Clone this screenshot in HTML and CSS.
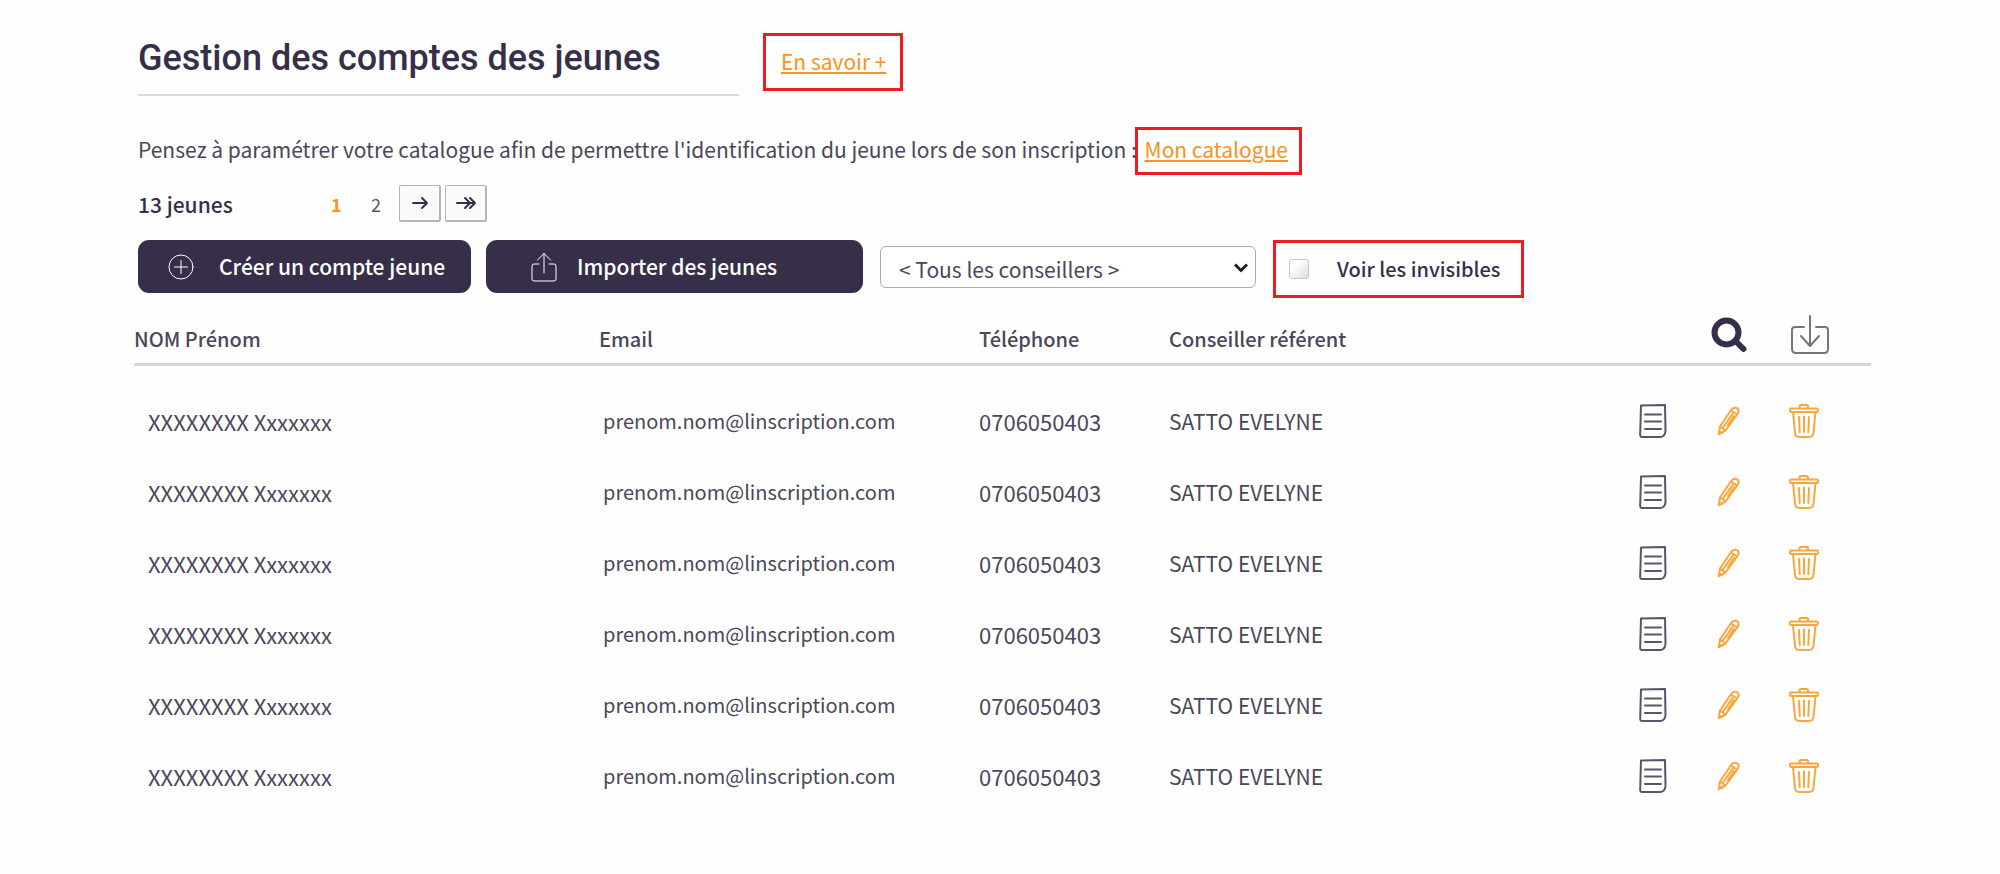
FILE: index.html
```html
<!DOCTYPE html>
<html lang="fr">
<head>
    <meta charset="UTF-8">
    <meta name="viewport" content="width=device-width, initial-scale=1.0">
    <title>Gestion des comptes des jeunes</title>
    <link rel="stylesheet" href="styles.css">
</head>
<body>
    <svg class="sprite" aria-hidden="true">
        <symbol id="doc" viewBox="0 0 28 36">
            <path d="M2 2.500 L26 2 L26.500 28 Q26 33.500 21.500 34 L3 34 Q1 34 1.200 31 Z M6 11.500h16M6 18.500h16M6 26h16"/>
        </symbol>
        <symbol id="pencil" viewBox="0 0 24 30">
            <path d="M1.800 28.200 L3 20.500 L14.500 3.500 Q17.500 .5 20.500 2.500 Q22.800 4.500 20.500 8 L8.500 24.500 Z M3 20.500l5.500 4M14 4.500l6 4M6 21.500L16.500 6.500M11 19l6-9M2.500 25.500l2.500 1.500"/>
        </symbol>
        <symbol id="trash" viewBox="0 0 32 36">
            <path d="M11.500 5V3.500Q11.500 2 13 2h5.500Q20 2 20 3.500V5M2.500 5.500h27q1.500 3-1 3.500H3.500Q1 9 2.500 5.500zM5 9l2 21q.5 4 4 4h10q4 0 4.500-4l2-21M11 14l.7 15M16 13.500V29M21 14l-.7 15"/>
        </symbol>
    </svg>

    <header class="title-bar">
        <h1>Gestion des comptes des jeunes</h1>
        <a href="#aide" class="link framed more">En savoir +</a>
    </header>

    <p class="intro">Pensez à paramétrer votre catalogue afin de permettre l'identification du jeune lors de son inscription : <a href="#catalogue" class="link framed catalogue">Mon catalogue</a></p>

    <div class="pager">
        <strong class="count">13 jeunes</strong>
        <nav>
            <a href="#p1" class="current">1</a>
            <a href="#p2">2</a>
            <button aria-label="Page suivante"><svg width="18" height="16" viewBox="0 0 18 16"><path d="M2 8h14M11 3l5 5-5 5"/></svg></button>
            <button aria-label="Dernière page"><svg width="22" height="16" viewBox="0 0 22 16"><path d="M2 8h18M10 3l5 5-5 5M15 3l5 5-5 5"/></svg></button>
        </nav>
    </div>

    <div class="toolbar">
        <button class="btn create">
            <svg width="28" height="28" viewBox="0 0 28 28"><circle cx="14" cy="14" r="12"/><path d="M14 7.500v13M7.500 14h13"/></svg>
            <span>Créer un compte jeune</span>
        </button>
        <button class="btn import">
            <svg width="26" height="30" viewBox="0 0 26 30"><path d="M8 12H3q-2 0-2 2v13q0 2 2 2h20q2 0 2-2V14q0-2-2-2h-5M13 21V1.500M6.500 8L13 1.500 19.500 8"/></svg>
            <span>Importer des jeunes</span>
        </button>
        <div class="select-box">
            <select aria-label="Conseiller">
                <option>&lt; Tous les conseillers &gt;</option>
            </select>
            <svg width="16" height="12" viewBox="0 0 16 12"><path d="M2 2.500l6 6 6-6"/></svg>
        </div>
        <div class="framed invisibles">
            <input type="checkbox" id="invisibles">
            <label for="invisibles">Voir les invisibles</label>
        </div>
    </div>

    <table>
        <colgroup>
            <col class="c-name"><col class="c-email"><col class="c-phone"><col><col class="c-icon"><col class="c-icon"><col class="c-last">
        </colgroup>
        <thead>
            <tr>
                <th>NOM Prénom</th>
                <th>Email</th>
                <th>Téléphone</th>
                <th>Conseiller référent</th>
                <th></th>
                <th class="icon"><button aria-label="Rechercher"><svg class="search" width="36" height="36" viewBox="0 0 36 36"><circle cx="15.500" cy="15.500" r="12"/><path d="M24.500 24l8 8"/></svg></button></th>
                <th class="icon last"><button aria-label="Exporter"><svg class="export" width="40" height="40" viewBox="0 0 40 40"><path d="M14 12H5q-3 0-3 3v19q0 4 4 4h28q4 0 4-4V15q0-3-3-3h-9M20 1v29M11 21l9 10 9-10"/></svg></button></th>
            </tr>
        </thead>
        <tbody id="rows"></tbody>
    </table>

    <script src="script.js"></script>
</body>
</html>
```
FILE: styles.css
```css
* {
    box-sizing: border-box;
}
body {
    margin: 0;
    padding: 33px 129px 40px 134px;
    font-family: "Noto Sans CJK SC", "Open Sans", sans-serif;
    font-size: 21px;
    line-height: 32px;
    color: #4b475a;
    background: #fefefe;
}
button, select {
    font: inherit;
    cursor: pointer;
}
svg {
    fill: none;
    stroke: currentColor;
    stroke-width: 2;
    stroke-linecap: round;
    stroke-linejoin: round;
}
.sprite {
    display: none;
}
.link {
    color: #f7941d;
    text-decoration: underline;
    text-decoration-thickness: 2px;
    text-underline-offset: 2px;
}
.framed {
    border: 3px solid #ed1c24;
}

.title-bar {
    display: flex;
    align-items: flex-start;
    gap: 24px;
    padding-left: 4px;
}
h1 {
    margin: 0;
    width: 601px;
    height: 63px;
    padding-top: 5px;
    border-bottom: 2px solid #dcdcdc;
    font-family: Roboto, sans-serif;
    font-size: 36px;
    font-weight: 500;
    line-height: 40px;
    color: #372f49;
}
.more {
    padding: 9px 14px 11px 15px;
}
.intro {
    margin: 29px 0 0;
    padding: 8px 4px;
}
.catalogue {
    margin-left: -7px;
    padding: 4px 11px 8px 7px;
}

.pager {
    display: flex;
    align-items: center;
    margin-top: 12px;
    padding-left: 4px;
    color: #372f49;
}
.count {
    width: 193px;
    font-weight: 500;
}
.pager nav {
    display: flex;
    align-items: center;
    gap: 4px;
    font-size: 18px;
}
.pager nav a {
    width: 24px;
    color: #5b576a;
    text-decoration: none;
}
.pager nav a.current {
    width: 36px;
    color: #f7941d;
    font-weight: 700;
}
.pager button {
    display: flex;
    align-items: center;
    justify-content: center;
    width: 42px;
    height: 37px;
    padding: 0;
    color: #372f49;
    background: #fafafa;
    border: 1px solid #b5b3bd;
    border-right-width: 2px;
    border-bottom-width: 2px;
    border-radius: 2px;
}

.toolbar {
    display: flex;
    align-items: flex-start;
    margin-top: 18px;
    padding-left: 4px;
}
.btn {
    display: flex;
    align-items: center;
    height: 53px;
    color: #fff;
    background: #372f49;
    border: none;
    border-radius: 11px;
    font-weight: 500;
    white-space: nowrap;
}
.btn svg {
    stroke-width: 1;
}
.btn span {
    padding-bottom: 2px;
}
.create {
    width: 333px;
    gap: 24px;
    padding: 0 0 0 29px;
}
.import {
    width: 377px;
    margin-left: 15px;
    gap: 20px;
    padding: 0 0 0 45px;
}
.select-box {
    position: relative;
    width: 376px;
    margin: 6px 0 0 17px;
}
.select-box select {
    appearance: none;
    width: 100%;
    height: 42px;
    padding: 3px 40px 0 18px;
    color: #4b475a;
    background: #fff;
    border: 1px solid #a9a9a9;
    border-radius: 6px;
}
.select-box svg {
    position: absolute;
    right: 7px;
    top: 16px;
    color: #222;
    stroke-width: 3;
    stroke-linecap: butt;
    stroke-linejoin: miter;
    pointer-events: none;
}
.invisibles {
    display: flex;
    align-items: center;
    gap: 28px;
    width: 251px;
    height: 58px;
    margin-left: 17px;
    padding-left: 13px;
    font-size: 20px;
    font-weight: 500;
    color: #372f49;
    white-space: nowrap;
}
.invisibles input {
    appearance: none;
    width: 20px;
    height: 20px;
    margin: 0;
    border: 1px solid #c6c6c6;
    border-radius: 3px;
    background: linear-gradient(135deg, #fff 30%, #ddd);
}

table {
    width: 100%;
    margin-top: 17px;
    border-collapse: collapse;
    table-layout: fixed;
}
.c-name { width: 465px; }
.c-email { width: 380px; }
.c-phone { width: 190px; }
.c-icon { width: 76px; }
.c-last { width: 104px; }
th {
    height: 48px;
    padding: 0;
    border-bottom: 3px solid #d6d6d6;
    text-align: left;
    font-size: 20px;
    font-weight: 500;
}
td {
    height: 71px;
    padding: 0 0 6px;
    font-size: 22px;
}
tbody::before {
    content: "";
    display: block;
    height: 22px;
}
td:nth-child(1) {
    padding-left: 14px;
}
td:nth-child(2) {
    padding-left: 4px;
    font-size: 20px;
}
td:nth-child(4) {
    font-size: 21px;
}
th.icon, td.icon {
    padding-bottom: 0;
    text-align: center;
}
th.last {
    padding-right: 18px;
}
td.last {
    padding-right: 30px;
}
td.icon {
    color: #f9a63a;
}
td.doc {
    color: #5a546b;
}
table button {
    padding: 0;
    color: inherit;
    background: none;
    border: none;
}
table svg {
    display: block;
}
.search {
    color: #372f49;
    stroke-width: 6;
}
.export {
    color: #77747f;
}
```
FILE: script.js
```js
const jeunes = Array(6).fill({
    nom: "XXXXXXXX Xxxxxxx",
    email: "prenom.nom@linscription.com",
    tel: "0706050403",
    conseiller: "SATTO EVELYNE"
});

document.getElementById("rows").innerHTML = jeunes.map(j => `
    <tr>
        <td>${j.nom}</td>
        <td>${j.email}</td>
        <td>${j.tel}</td>
        <td>${j.conseiller}</td>
        <td class="icon doc"><button aria-label="Dossier"><svg width="28" height="36"><use href="#doc"/></svg></button></td>
        <td class="icon"><button aria-label="Modifier"><svg width="24" height="30"><use href="#pencil"/></svg></button></td>
        <td class="icon last"><button aria-label="Supprimer"><svg width="32" height="36"><use href="#trash"/></svg></button></td>
    </tr>`).join("");
```
